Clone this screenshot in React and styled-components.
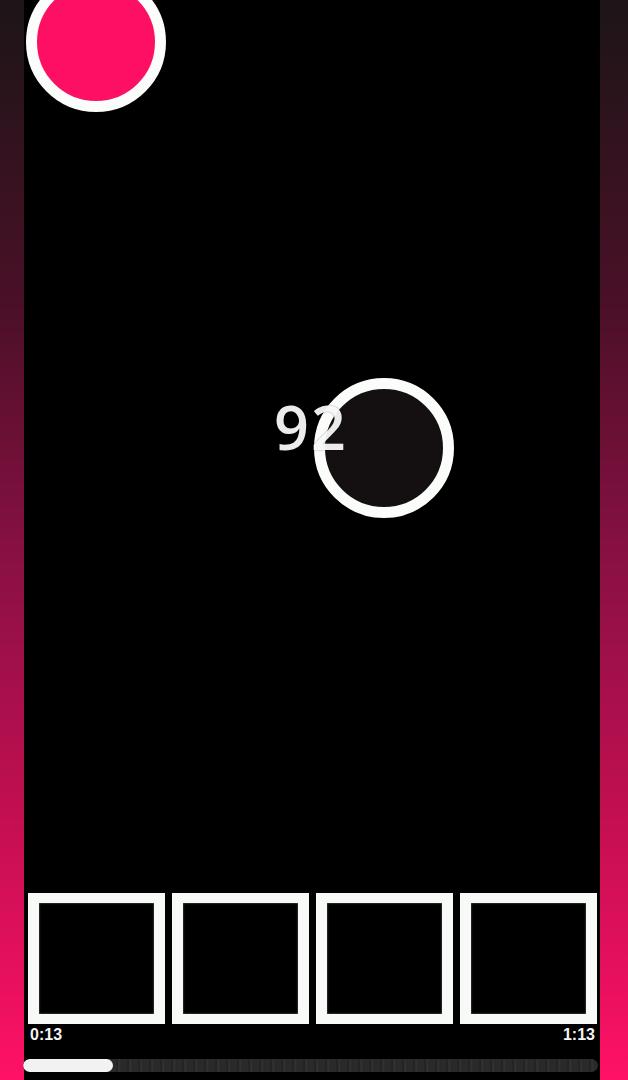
import styled, { createGlobalStyle } from "styled-components";

const GlobalStyle = createGlobalStyle`
  html, body {
    margin: 0;
    padding: 0;
    height: 100%;
  }
  body {
    background: linear-gradient(180deg, #1c1517 0%, #4a1027 28%, #8a1043 52%, #c40f52 76%, #ff1166 100%);
    font-family: "Open Sans", "DejaVu Sans", sans-serif;
    overflow: hidden;
  }
`;

const Screen = styled.div`
  display: flex;
  justify-content: flex-start;
  height: 100vh;
  padding-left: 24px;
  box-sizing: border-box;
`;

const Column = styled.main`
  display: flex;
  flex-direction: column;
  width: 576px;
  height: 100%;
  background: #000;
  padding: 0 3px 8px 4px;
  box-sizing: border-box;
`;

const Stage = styled.div`
  position: relative;
  flex: 1;
  margin: 0 -3px 0 -4px;
`;

const Ball = styled.div`
  position: absolute;
  left: ${(p) => p.x}px;
  top: ${(p) => p.y}px;
  width: 140px;
  height: 140px;
  border-radius: 50%;
  border: 11px solid #fbfdfb;
  background: ${(p) => p.fill};
  box-sizing: border-box;
`;

const Score = styled.span`
  position: absolute;
  left: 250px;
  top: 396px;
  z-index: 2;
  font-family: "Open Sans", "DejaVu Sans", sans-serif;
  font-size: 61px;
  font-weight: 600;
  line-height: 1;
  letter-spacing: 2px;
  color: rgba(255, 255, 255, 0.92);
  text-shadow: 0 0 2px rgba(0, 0, 0, 0.4);
`;

const Strip = styled.div`
  display: grid;
  grid-template-columns: repeat(4, 137px);
  gap: 7px;
  padding-top: 4px;
`;

const Frame = styled.div`
  height: 131px;
  border: 11px solid #f8faf7;
  border-top-width: 10px;
  border-bottom-width: 10px;
  background: #000;
  box-sizing: border-box;
  box-shadow: inset 0 0 2px rgba(255, 255, 255, 0.5);
`;

const Times = styled.div`
  display: flex;
  justify-content: space-between;
  padding: 2px 2px 0 2px;
  height: 35px;
  box-sizing: border-box;
`;

const Time = styled.span`
  font-family: "Liberation Sans", Arial, sans-serif;
  font-weight: 700;
  font-size: 16px;
  line-height: 18px;
  color: #f4f4f4;
`;

const Track = styled.div`
  height: 13px;
  margin: 0 -1px 0 -5px;
  border-radius: 7px;
  background: repeating-linear-gradient(90deg, #2a2a2a 0px, #2a2a2a 5px, #1f1f1f 6px, #333 8px, #262626 11px);
  overflow: hidden;
`;

const Fill = styled.div`
  height: 100%;
  border-radius: 7px;
  background: #f2f2f2;
`;

export default function App() {
  const progress = 90 / 576;
  return (
    <>
      <GlobalStyle />
      <Screen>
        <Column>
          <Stage>
            <Ball x={2} y={-28} fill="#fd1063" />
            <Ball x={290} y={378} fill="#141011" />
            <Score>92</Score>
          </Stage>
          <Strip>
            <Frame />
            <Frame />
            <Frame />
            <Frame />
          </Strip>
          <Times>
            <Time>0:13</Time>
            <Time>1:13</Time>
          </Times>
          <Track>
            <Fill style={{ width: `${progress * 100}%` }} />
          </Track>
        </Column>
      </Screen>
    </>
  );
}
